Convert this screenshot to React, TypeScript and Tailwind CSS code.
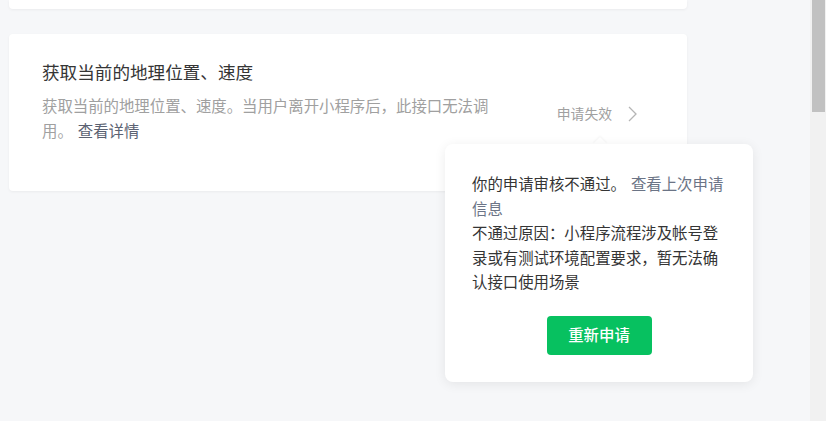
const font = { fontFamily: '"Noto Sans CJK SC", "Noto Sans", sans-serif' };

function Chevron() {
  return (
    <svg width="9" height="16" viewBox="0 0 9 16" fill="none" className="text-[#b5b5b5]">
      <polyline points="1,1 8,8 1,15" stroke="currentColor" strokeWidth="1.3" />
    </svg>
  );
}

export default function App() {
  return (
    <div className="relative flex h-[421px] w-full overflow-hidden bg-[#f6f7f9]" style={font}>
      {/* main column */}
      <div className="flex w-[810px] flex-col pl-[9px]">
        <div className="h-[9px] w-[678px] rounded-b-[4px] bg-white shadow-[0_1px_3px_rgba(0,0,0,0.05)]" />

        <div className="mt-[25px] flex h-[157px] w-[678px] rounded-[4px] bg-white shadow-[0_1px_3px_rgba(0,0,0,0.05)]">
          <div className="pl-[33px] pt-[25px]">
            <h2 className="text-[17.6px] leading-[26px] text-[#353535]">获取当前的地理位置、速度</h2>
            <p className="mt-[8px] w-[452px] text-[15.4px] leading-[24.5px] text-[#a0a0a0]">
              获取当前的地理位置、速度。当用户离开小程序后，此接口无法调用。
              <span className="ml-[5px] text-[#5b6272]">查看详情</span>
            </p>
          </div>
          <div className="ml-auto mr-[50px] flex items-center gap-[16px] pt-[2px] text-[#a0a0a0]">
            <span className="text-[13.8px]">申请失效</span>
            <Chevron />
          </div>
        </div>
      </div>

      {/* scrollbar */}
      <div className="flex w-[16px] justify-center bg-[#f1f1f1]">
        <div className="h-[112px] w-[13px] bg-[#c1c1c1]" />
      </div>

      {/* popover */}
      <div className="absolute left-[595px] top-[139px] h-[10px] w-[10px] rotate-45 bg-white shadow-[-1px_-1px_2px_rgba(0,0,0,0.04)]" />
      <div className="absolute left-[445px] top-[144px] w-[308px] rounded-[8px] bg-white px-[27px] pb-[27px] pt-[27px] shadow-[0_2px_12px_rgba(0,0,0,0.08)]">
        <div className="w-[255px] text-[15.4px] leading-[24.5px] text-[#353535]">
          <p>
            你的申请审核不通过。
            <span className="ml-[5px] text-[#6b7486]">查看上次申请信息</span>
          </p>
          <p>不通过原因：小程序流程涉及帐号登录或有测试环境配置要求，暂无法确认接口使用场景</p>
        </div>
        <div className="mt-[22px] flex justify-center">
          <button className="h-[39px] w-[105px] rounded-[4px] bg-[#07c160] text-[15.4px] font-medium text-white">
            重新申请
          </button>
        </div>
      </div>
    </div>
  );
}
